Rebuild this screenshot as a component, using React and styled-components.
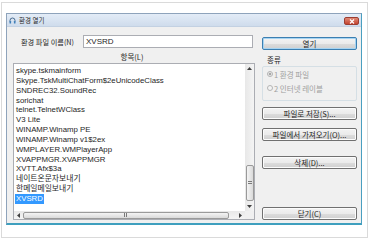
import React from "react";
import styled, { createGlobalStyle } from "styled-components";

const GlobalStyle = createGlobalStyle`
  html, body {
    margin: 0;
    padding: 0;
    background: #ffffff;
  }
  body {
    font-family: "Liberation Sans", "Noto Sans CJK KR", sans-serif;
  }
`;

const items = [
  "skype.tskmainform",
  "Skype.TskMultiChatForm$2eUnicodeClass",
  "SNDREC32.SoundRec",
  "sorichat",
  "telnet.TelnetWClass",
  "V3 Lite",
  "WINAMP.Winamp PE",
  "WINAMP.Winamp v1$2ex",
  "WMPLAYER.WMPlayerApp",
  "XVAPPMGR.XVAPPMGR",
  "XVTT.Afx$3a",
  "네이트온문자보내기",
  "한메일메일보내기",
  "XVSRD",
];

function App() {
  return (
    <>
      <GlobalStyle />
      <Frame>
        <Window>
          <TitleBar>
            <TitleLeft>
              <svg width="7" height="7" viewBox="0 0 7 7">
                <path
                  d="M1 4.5 V3.5 A2.5 2.5 0 0 1 6 3.5 V4.5"
                  fill="none"
                  stroke="#3a5f86"
                  strokeWidth="0.9"
                />
                <rect x="0.5" y="4" width="1.6" height="2.6" rx="0.4" fill="#3f7fb8" />
                <rect x="4.9" y="4" width="1.6" height="2.6" rx="0.4" fill="#3f7fb8" />
              </svg>
              <TitleText>환경 열기</TitleText>
            </TitleLeft>
            <CloseButton>
              <svg width="6" height="5" viewBox="0 0 6 5">
                <path d="M1 0.5 L5 4.5 M5 0.5 L1 4.5" stroke="#ffffff" strokeWidth="1.2" />
              </svg>
            </CloseButton>
          </TitleBar>
          <Body>
            <LeftColumn>
              <NameRow>
                <Label>환경 파일 이름(N)</Label>
                <TextInput>XVSRD</TextInput>
              </NameRow>
              <ListCaption>항목(L)</ListCaption>
              <ListBox>
                <ListItems>
                  {items.map((item, i) => (
                    <ListRow key={item}>
                      <ItemText $selected={i === items.length - 1}>{item}</ItemText>
                    </ListRow>
                  ))}
                </ListItems>
                <VScroll>
                  <ArrowButton>
                    <svg width="5" height="3" viewBox="0 0 5 3">
                      <path d="M0 3 L2.5 0 L5 3 Z" fill="#404040" />
                    </svg>
                  </ArrowButton>
                  <Track />
                  <VThumb>
                    <Grip $vertical />
                  </VThumb>
                  <ArrowButton>
                    <svg width="5" height="3" viewBox="0 0 5 3">
                      <path d="M0 0 L2.5 3 L5 0 Z" fill="#404040" />
                    </svg>
                  </ArrowButton>
                </VScroll>
                <HScroll>
                  <ArrowButton>
                    <svg width="3" height="5" viewBox="0 0 3 5">
                      <path d="M3 0 L0 2.5 L3 5 Z" fill="#404040" />
                    </svg>
                  </ArrowButton>
                  <HThumb>
                    <Grip />
                  </HThumb>
                  <Track />
                  <ArrowButton>
                    <svg width="3" height="5" viewBox="0 0 3 5">
                      <path d="M0 0 L3 2.5 L0 5 Z" fill="#404040" />
                    </svg>
                  </ArrowButton>
                </HScroll>
                <Corner />
              </ListBox>
            </LeftColumn>
            <RightColumn>
              <Button $default>열기</Button>
              <GroupCaption>종류</GroupCaption>
              <GroupBox>
                <RadioRow>
                  <Radio $checked />
                  1 환경 파일
                </RadioRow>
                <RadioRow>
                  <Radio />
                  2 인터넷 레이블
                </RadioRow>
              </GroupBox>
              <Button $top={6}>파일로 저장(S)...</Button>
              <Button $top={8}>파일에서 가져오기(O)...</Button>
              <Button $top={15}>삭제(D)...</Button>
              <Button $bottom>닫기(C)</Button>
            </RightColumn>
          </Body>
        </Window>
      </Frame>
    </>
  );
}

const Frame = styled.div`
  box-sizing: border-box;
  width: 367px;
  height: 236px;
  margin: 2px 0 0 1px;
  border: 1px solid #dadada;
  padding: 10px 0 0 4px;
`;

const Window = styled.div`
  box-sizing: border-box;
  width: 356px;
  height: 212px;
  display: flex;
  flex-direction: column;
  border: 1px solid #8ea3bb;
  border-right-color: #4a9fc0;
  border-bottom: 2px solid #3f9fbe;
  background: #f0f0f0;
`;

const TitleBar = styled.div`
  height: 13px;
  display: flex;
  align-items: center;
  justify-content: space-between;
  background: linear-gradient(#e3ecf7, #cfdcec);
  border-bottom: 1px solid #c3d1e2;
  box-sizing: border-box;
`;

const TitleLeft = styled.div`
  display: flex;
  align-items: center;
  gap: 3px;
  padding-left: 2px;
`;

const TitleText = styled.span`
  font-family: "Noto Sans CJK KR", sans-serif;
  font-size: 6.5px;
  color: #2b2b2b;
`;

const CloseButton = styled.div`
  width: 15px;
  height: 8px;
  margin-right: 2px;
  margin-top: 2px;
  border: 1px solid #9b3d31;
  border-radius: 2px;
  background: linear-gradient(#e08a76, #c4432f);
  display: flex;
  align-items: center;
  justify-content: center;
  box-sizing: border-box;
`;

const Body = styled.div`
  flex: 1;
  display: flex;
  gap: 7px;
  padding: 8px 3px 3px 6px;
  font-size: 8px;
  color: #1e1e1e;
`;

const LeftColumn = styled.div`
  width: 242px;
  display: flex;
  flex-direction: column;
`;

const NameRow = styled.div`
  display: flex;
  align-items: center;
  justify-content: space-between;
  padding: 0 2px 0 8px;
`;

const Label = styled.span`
  white-space: nowrap;
  font-family: "Noto Sans CJK KR", sans-serif;
  font-size: 7.2px;
`;

const TextInput = styled.div`
  box-sizing: border-box;
  width: 170px;
  height: 13px;
  border: 1px solid #abadb3;
  background: #ffffff;
  padding-left: 2px;
  line-height: 11px;
  font-size: 8px;
`;

const ListCaption = styled.div`
  height: 10px;
  margin: 4px 0 1px;
  line-height: 10px;
  text-align: center;
  padding-right: 4px;
  font-family: "Noto Sans CJK KR", sans-serif;
  font-size: 7.5px;
`;

const ListBox = styled.div`
  box-sizing: border-box;
  height: 157px;
  border: 1px solid #abadb3;
  background: #ffffff;
  display: grid;
  grid-template-columns: 1fr 9px;
  grid-template-rows: 1fr 8px;
  overflow: hidden;
`;

const ListItems = styled.div`
  padding: 2px 0 0 1px;
  overflow: hidden;
`;

const ListRow = styled.div`
  height: 9.85px;
  line-height: 9.85px;
  white-space: nowrap;
`;

const ItemText = styled.span`
  display: inline-block;
  padding: 0 1px;
  font-size: 7.8px;
  background: ${(p) => (p.$selected ? "#3399ff" : "transparent")};
  color: ${(p) => (p.$selected ? "#ffffff" : "#1e1e1e")};
`;

const VScroll = styled.div`
  display: flex;
  flex-direction: column;
  background: linear-gradient(90deg, #e8e8e8, #f4f4f4);
`;

const HScroll = styled.div`
  display: flex;
  background: linear-gradient(#e8e8e8, #f4f4f4);
`;

const ArrowButton = styled.div`
  flex: 0 0 9px;
  min-width: 8px;
  min-height: 8px;
  display: flex;
  align-items: center;
  justify-content: center;
`;

const Track = styled.div`
  flex: 1;
`;

const VThumb = styled.div`
  height: 36px;
  margin: 0 0.5px 1px;
  box-sizing: border-box;
  border: 1px solid #9a9a9a;
  border-radius: 2px;
  background: linear-gradient(90deg, #f4f4f4, #dadada);
  display: flex;
  align-items: center;
  justify-content: center;
`;

const HThumb = styled.div`
  width: 206px;
  margin: 0.5px 0;
  box-sizing: border-box;
  border: 1px solid #9a9a9a;
  border-radius: 2px;
  background: linear-gradient(#f4f4f4, #dadada);
  display: flex;
  align-items: center;
  justify-content: center;
`;

const Grip = styled.div`
  width: 4px;
  height: 4px;
  background: ${(p) =>
    p.$vertical
      ? "repeating-linear-gradient(#7a7a7a 0 1px, transparent 1px 2px)"
      : "repeating-linear-gradient(90deg, #7a7a7a 0 1px, transparent 1px 2px)"};
`;

const Corner = styled.div`
  background: #f0f0f0;
`;

const RightColumn = styled.div`
  width: 95px;
  display: flex;
  flex-direction: column;
  padding-top: 2px;
`;

const Button = styled.div`
  box-sizing: border-box;
  height: 13px;
  flex: 0 0 13px;
  margin-top: ${(p) => (p.$bottom ? "auto" : `${p.$top || 0}px`)};
  border: 1px solid ${(p) => (p.$default ? "#3c7fb1" : "#707070")};
  border-radius: 2px;
  background: linear-gradient(#f3f3f3 0%, #ebebeb 50%, #dddddd 51%, #cfcfcf 100%);
  box-shadow: ${(p) => (p.$default ? "inset 0 0 0 1px #a6d4f2" : "inset 0 0 0 1px #fcfcfc")};
  display: flex;
  align-items: center;
  justify-content: center;
  font-family: "Noto Sans CJK KR", sans-serif;
  font-size: 7.5px;
  color: #1e1e1e;
  white-space: nowrap;
`;

const GroupCaption = styled.div`
  height: 10px;
  line-height: 10px;
  margin: 5px 0 1px 5px;
  font-family: "Noto Sans CJK KR", sans-serif;
  font-size: 7.5px;
`;

const GroupBox = styled.div`
  box-sizing: border-box;
  height: 35px;
  border: 1px solid #d5dfe5;
  border-radius: 2px;
  padding: 0 4px;
`;

const RadioRow = styled.div`
  height: 14px;
  display: flex;
  align-items: center;
  gap: 1px;
  font-family: "Noto Sans CJK KR", sans-serif;
  font-size: 7.5px;
  color: #a0a0a0;
  white-space: nowrap;
`;

const Radio = styled.span`
  box-sizing: border-box;
  width: 6px;
  height: 6px;
  border-radius: 50%;
  border: 1px solid #b4b4b4;
  background: ${(p) =>
    p.$checked ? "radial-gradient(circle, #a8a8a8 0 1.5px, #f4f4f4 1.6px)" : "#f4f4f4"};
`;

export default App;
